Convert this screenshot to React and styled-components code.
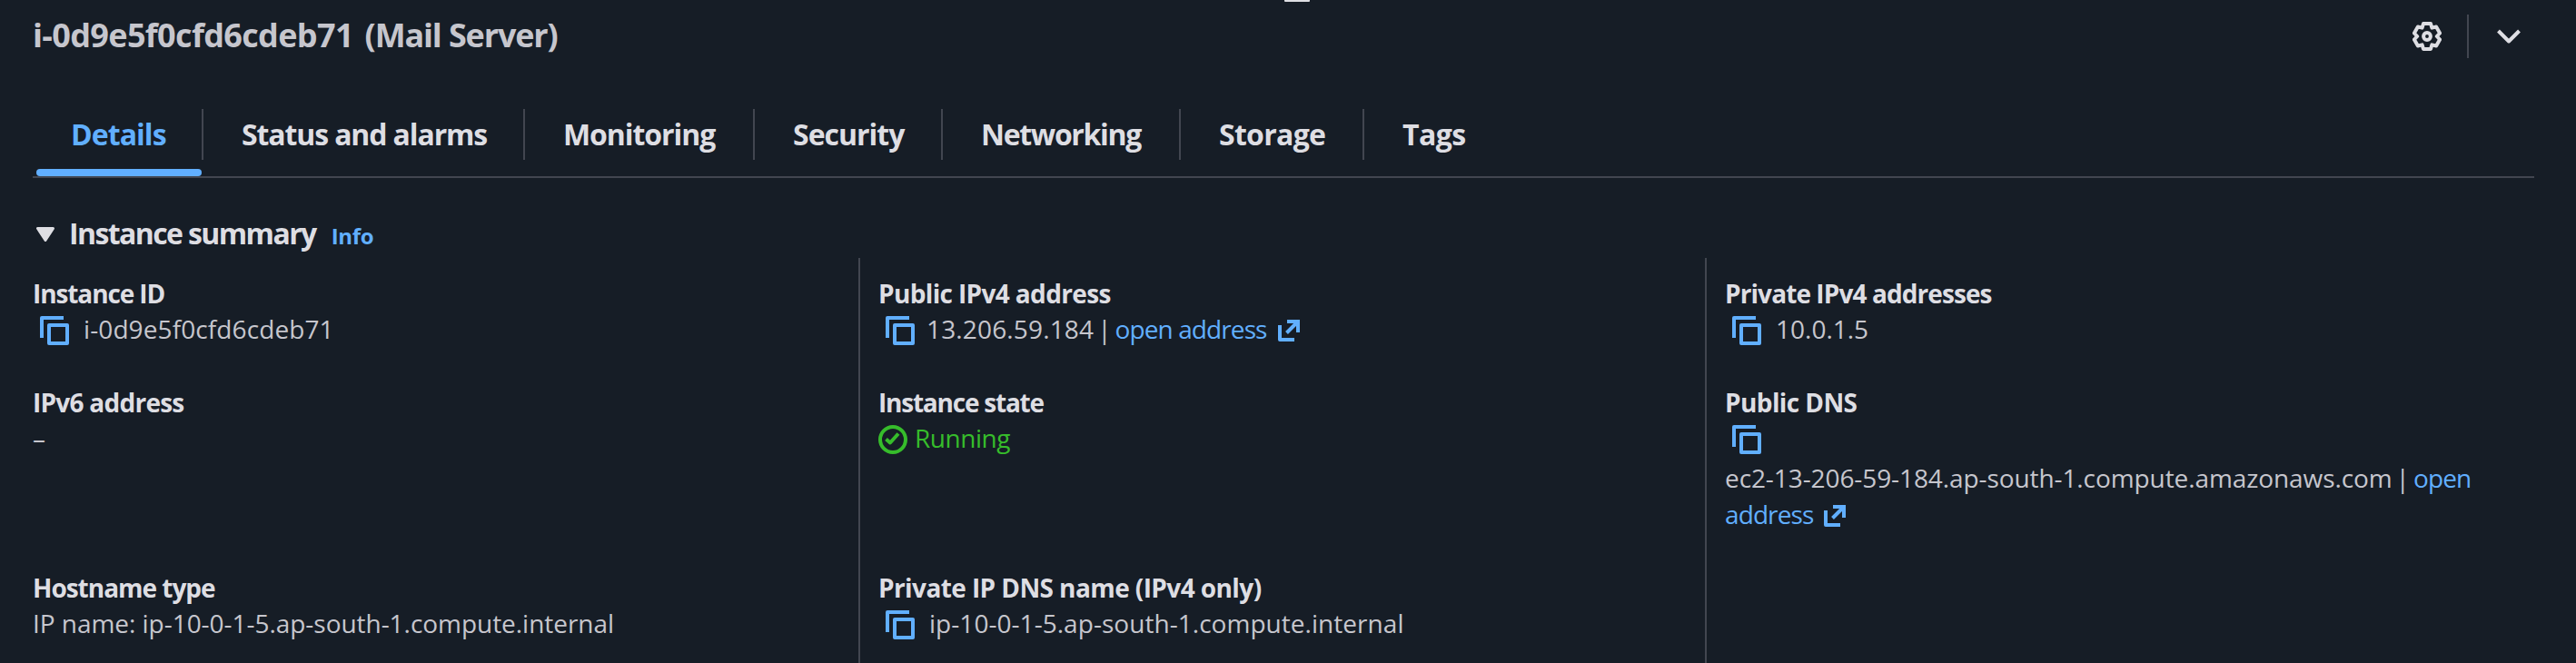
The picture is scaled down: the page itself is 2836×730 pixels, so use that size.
import React from 'react';
import styled, { createGlobalStyle } from 'styled-components';

const colors = {
    bg: "#161d26",
    border: "#424650",
    heading: "#dedee3",
    text: "#c6c6cd",
    link: "#61afff",
    success: "#36bc2b"
}

const tabs = [
    { name: "Details", width: 184, ls: -0.95, active: true },
    { name: "Status and alarms", width: 354, ls: -1.12 },
    { name: "Monitoring", width: 253, ls: -1.07 },
    { name: "Security", width: 207, ls: -1 },
    { name: "Networking", width: 262, ls: -1.33 },
    { name: "Storage", width: 202, ls: -0.7 },
    { name: "Tags", width: 150, ls: -0.6 }
]

function CopyIcon() {
    return(
        <Icon $size={32} viewBox="0 0 32 32">
            <path d="M26 2H2V24" />
            <rect x="10" y="10" width="20" height="20" />
        </Icon>
    )
}

function ExternalIcon() {
    return(
        <InlineIcon $size={24} viewBox="0 0 24 24">
            <path d="M2 6V22H18" />
            <path d="M10 2H22V14M21.5 2.5L9.5 14.5" strokeLinejoin="miter" />
        </InlineIcon>
    )
}

function CheckIcon() {
    return(
        <Icon $size={32} viewBox="0 0 32 32">
            <circle cx="16" cy="16" r="14" />
            <path d="M8.5 15.5L13 19.5L22 9.5" />
        </Icon>
    )
}

function GearIcon() {
    return(
        <Icon $size={32} viewBox="-16 -16 32 32">
            <path d="M-4 -14H4L5.4 -9.4L10.1 -10.5L14.1 -3.5L10.8 0L14.1 3.5L10.1 10.5L5.4 9.4L4 14H-4L-5.4 9.4L-10.1 10.5L-14.1 3.5L-10.8 0L-14.1 -3.5L-10.1 -10.5L-5.4 -9.4Z" />
            <circle r="3.9" />
        </Icon>
    )
}

function ChevronIcon() {
    return(
        <Icon $size={32} viewBox="0 0 32 32">
            <path d="M4.5 10L16 21.5L27.5 10" />
        </Icon>
    )
}

function Field({ label, ls, children }) {
    return(
        <Cell>
            <Label $ls={ls}>{label}</Label>
            {children}
        </Cell>
    )
}

export default function App() {
    return(
        <Panel>
            <GlobalStyle />
            <DragHandle />
            <Header>
                <Title>i-0d9e5f0cfd6cdeb71 <InstanceName>(Mail Server)</InstanceName></Title>
                <Actions>
                    <IconButton aria-label="Preferences"><GearIcon /></IconButton>
                    <Separator />
                    <IconButton aria-label="Collapse"><ChevronIcon /></IconButton>
                </Actions>
            </Header>
            <TabList>
                {tabs.map((tab) => (
                    <Tab key={tab.name} $width={tab.width} $active={tab.active}>
                        <TabLabel $ls={tab.ls}>{tab.name}</TabLabel>
                    </Tab>
                ))}
            </TabList>
            <SummaryHeader>
                <Caret viewBox="0 0 20 16">
                    <path d="M1.5 1.5H18.5L10 14.5Z" />
                </Caret>
                <SummaryTitle>Instance summary</SummaryTitle>
                <InfoLink>Info</InfoLink>
            </SummaryHeader>
            <Grid>
                <Field label="Instance ID" ls={-1.1}>
                    <Value>
                        <CopyButton><CopyIcon /></CopyButton>
                        <Text $ls={0.1}>i-0d9e5f0cfd6cdeb71</Text>
                    </Value>
                </Field>
                <Field label="Public IPv4 address" ls={-0.64}>
                    <Value>
                        <CopyButton $gap={13}><CopyIcon /></CopyButton>
                        <Text $ls={0.15}>13.206.59.184</Text>
                        <Pipe>|</Pipe>
                        <Link>open address<ExternalIcon /></Link>
                    </Value>
                </Field>
                <Field label="Private IPv4 addresses" ls={-0.91}>
                    <Value>
                        <CopyButton><CopyIcon /></CopyButton>
                        <Text>10.0.1.5</Text>
                    </Value>
                </Field>
                <Field label="IPv6 address" ls={-0.75}>
                    <Value>–</Value>
                </Field>
                <Field label="Instance state" ls={-1.22}>
                    <Status>
                        <CheckIcon />
                        <Text $ls={-0.45}>Running</Text>
                    </Status>
                </Field>
                <Field label="Public DNS" ls={-0.6}>
                    <CopyLine>
                        <CopyButton><CopyIcon /></CopyButton>
                    </CopyLine>
                    <WrappedValue>
                        <Text $ls={-0.09}>ec2-13-206-59-184.ap-south-1.compute.amazonaws.com</Text>
                        <Pipe>|</Pipe>
                        <Link>open address<ExternalIcon /></Link>
                    </WrappedValue>
                </Field>
                <Field label="Hostname type" ls={-1.02}>
                    <Value><Text $ls={-0.04}>IP name: ip-10-0-1-5.ap-south-1.compute.internal</Text></Value>
                </Field>
                <Field label="Private IP DNS name (IPv4 only)" ls={-0.59}>
                    <Value>
                        <CopyButton><CopyIcon /></CopyButton>
                        <Text $ls={0.04}>ip-10-0-1-5.ap-south-1.compute.internal</Text>
                    </Value>
                </Field>
                <Cell />
            </Grid>
        </Panel>
    )
}

const GlobalStyle = createGlobalStyle`
    * { box-sizing: border-box; }
    body {
        margin: 0;
        background: ${colors.bg};
        overflow: hidden;
    }
`

const Panel = styled.section`
    position: relative;
    height: 730px;
    overflow: hidden;
    background: ${colors.bg};
    color: ${colors.text};
    font-family: "Open Sans", "Noto Sans", sans-serif;
    font-size: 28px;
    line-height: 40px;
`

const DragHandle = styled.div`
    position: absolute;
    top: 0;
    left: 1414px;
    width: 28px;
    height: 2px;
    border-radius: 0 0 1px 1px;
    background: ${colors.heading};
`

const Header = styled.header`
    display: flex;
    justify-content: space-between;
    height: 120px;
    padding: 16px 58px 0 36px;
`

const Title = styled.h2`
    margin: 0;
    padding-top: 1px;
    font-size: 36px;
    font-weight: 700;
    line-height: 44px;
    letter-spacing: -0.65px;
`

const InstanceName = styled.span`
    margin-left: 4px;
    letter-spacing: -1.15px;
`

const Actions = styled.div`
    display: flex;
    align-items: center;
    height: 48px;
    color: ${colors.heading};
`

const IconButton = styled.button`
    display: flex;
    padding: 0;
    border: 0;
    background: none;
    color: inherit;
`

const Separator = styled.div`
    width: 2px;
    height: 48px;
    margin: 0 28px;
    background: ${colors.border};
`

const Icon = styled.svg`
    display: block;
    flex: none;
    width: ${({ $size }) => $size}px;
    height: ${({ $size }) => $size}px;
    fill: none;
    stroke: currentColor;
    stroke-width: 4;
    stroke-linejoin: round;
`

const InlineIcon = styled(Icon)`
    display: inline-block;
    margin-left: 12px;
    vertical-align: -3px;
`

const TabList = styled.nav`
    display: flex;
    height: 76px;
    margin: 0 46px 0 36px;
    padding-left: 4px;
    border-bottom: 2px solid ${colors.border};
`

const Tab = styled.div`
    display: flex;
    flex-direction: column;
    justify-content: space-between;
    flex: 0 0 ${({ $width }) => $width}px;
    color: ${({ $active }) => $active ? colors.link : colors.heading};

    &::after {
        content: "";
        height: 8px;
        margin-right: 2px;
        border-radius: 4px;
        background: ${({ $active }) => $active ? colors.link : "transparent"};
    }
`

const TabLabel = styled.span`
    height: 56px;
    padding: 8px 0 0 42px;
    border-right: 2px solid ${colors.border};
    font-size: 32px;
    font-weight: 700;
    letter-spacing: ${({ $ls }) => $ls}px;
    white-space: nowrap;

    ${Tab}:first-child & {
        padding-left: 38px;
    }

    ${Tab}:last-child & {
        border-right: 0;
    }
`

const SummaryHeader = styled.div`
    display: flex;
    align-items: baseline;
    height: 47px;
    margin-top: 41px;
    padding-left: 40px;
`

const Caret = styled.svg`
    width: 20px;
    height: 16px;
    margin: 0 16px 3px 0;
    align-self: flex-start;
    margin-top: 13px;
    fill: ${colors.heading};
    stroke: ${colors.heading};
    stroke-width: 3;
    stroke-linejoin: round;
`

const SummaryTitle = styled.h3`
    margin: 0;
    color: ${colors.heading};
    font-size: 32px;
    font-weight: 700;
    letter-spacing: -1.6px;
`

const InfoLink = styled.a`
    margin-left: 17px;
    color: ${colors.link};
    font-size: 24px;
    font-weight: 700;
    letter-spacing: -0.3px;
`

const Grid = styled.div`
    display: grid;
    grid-template-columns: 945px 932px 932px;
    grid-template-rows: 138px 204px 140px;
`

const Cell = styled.div`
    padding: 0 0 40px 20px;
    border-left: 2px solid ${colors.border};

    &:nth-child(3n + 1) {
        padding-left: 36px;
        border-left: 0;
    }

    &:nth-child(-n + 3) {
        padding-top: 18px;
    }
`

const Label = styled.div`
    height: 40px;
    padding-top: 1px;
    color: ${colors.heading};
    font-weight: 700;
    letter-spacing: ${({ $ls }) => $ls}px;
    white-space: nowrap;
`

const Value = styled.div`
    display: flex;
    align-items: center;
    height: 40px;
    white-space: nowrap;
`

const WrappedValue = styled.div`
    width: 840px;
`

const CopyLine = styled(Value)`
    margin-bottom: 4px;
`

const CopyButton = styled.button`
    display: flex;
    margin: 4px ${({ $gap = 16 }) => $gap}px 0 8px;
    padding: 0;
    border: 0;
    background: none;
    color: ${colors.link};
`

const Text = styled.span`
    letter-spacing: ${({ $ls = 0 }) => $ls}px;
    white-space: nowrap;
`

const Pipe = styled.span`
    margin: 0 4px;
`

const Link = styled.a`
    color: ${colors.link};
    letter-spacing: -0.9px;
`

const Status = styled(Value)`
    gap: 8px;
    color: ${colors.success};

    svg {
        margin-top: 4px;
    }
`
